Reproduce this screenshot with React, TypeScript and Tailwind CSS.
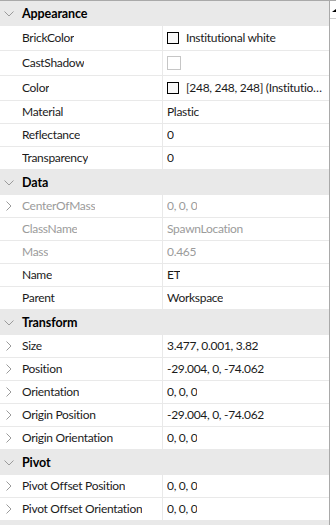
import React from 'react';

type Row = {
  name: string;
  value: string;
  kind?: 'swatch' | 'check';
  disabled?: boolean;
  expand?: boolean;
};

type Section = { title: string; rows: Row[] };

const sections: Section[] = [
  {
    title: 'Appearance',
    rows: [
      { name: 'BrickColor', value: 'Institutional white', kind: 'swatch' },
      { name: 'CastShadow', value: '', kind: 'check' },
      { name: 'Color', value: '[248, 248, 248] (Institutional white)', kind: 'swatch' },
      { name: 'Material', value: 'Plastic' },
      { name: 'Reflectance', value: '0' },
      { name: 'Transparency', value: '0' },
    ],
  },
  {
    title: 'Data',
    rows: [
      { name: 'CenterOfMass', value: '0, 0, 0', disabled: true, expand: true },
      { name: 'ClassName', value: 'SpawnLocation', disabled: true },
      { name: 'Mass', value: '0.465', disabled: true },
      { name: 'Name', value: 'ET' },
      { name: 'Parent', value: 'Workspace' },
    ],
  },
  {
    title: 'Transform',
    rows: [
      { name: 'Size', value: '3.477, 0.001, 3.82', expand: true },
      { name: 'Position', value: '-29.004, 0, -74.062', expand: true },
      { name: 'Orientation', value: '0, 0, 0', expand: true },
      { name: 'Origin Position', value: '-29.004, 0, -74.062', expand: true },
      { name: 'Origin Orientation', value: '0, 0, 0', expand: true },
    ],
  },
  {
    title: 'Pivot',
    rows: [
      { name: 'Pivot Offset Position', value: '0, 0, 0', expand: true },
      { name: 'Pivot Offset Orientation', value: '0, 0, 0', expand: true },
    ],
  },
];

function ChevronDown() {
  return (
    <svg width="10" height="6" viewBox="0 0 10 6" className="text-[#9a9a9a]">
      <path d="M0.5 0.5 L5 5 L9.5 0.5" fill="none" stroke="currentColor" strokeWidth="1" />
    </svg>
  );
}

function ChevronRight() {
  return (
    <svg width="6" height="10" viewBox="0 0 6 10" className="text-[#9a9a9a]">
      <path d="M0.5 0.5 L5 5 L0.5 9.5" fill="none" stroke="currentColor" strokeWidth="1" />
    </svg>
  );
}

function PropRow({ row }: { row: Row }) {
  const tall = row.kind === 'swatch' || row.kind === 'check';
  const text = row.disabled ? 'text-[#9b9b9b]' : 'text-[#1b1b1b]';
  return (
    <div className={`flex border-b border-[#e9e9e9] bg-white ${tall ? 'h-[25px]' : 'h-[23px]'}`}>
      <div className="flex w-[163px] shrink-0 items-center border-r border-[#e9e9e9]">
        <div className="flex w-[22px] shrink-0 items-center pl-[6px]">
          {row.expand && <ChevronRight />}
        </div>
        <span className={`truncate ${text}`}>{row.name}</span>
      </div>
      <div className="flex min-w-0 flex-1 items-center pl-[4px] pr-[6px]">
        {row.kind === 'swatch' && (
          <div className="mr-[7px] h-[12px] w-[12px] shrink-0 border border-black bg-[#f8f8f8]" />
        )}
        {row.kind === 'check' && (
          <div className="h-[14px] w-[14px] shrink-0 border border-[#c6c6c6] bg-white" />
        )}
        <span className={`truncate ${text}`}>{row.value}</span>
      </div>
    </div>
  );
}

export default function App() {
  return (
    <div
      className="flex h-[525px] w-[336px] overflow-hidden border-t border-[#a9a9a9] bg-[#e9e9e9] text-[12px] leading-[16px] tracking-[-0.3px]"
      style={{ fontFamily: 'Lato, "Liberation Sans", sans-serif' }}
    >
      <div className="w-[329px] shrink-0">
        {sections.map((s) => (
          <div key={s.title}>
            <div className="flex h-[25px] items-center bg-[#e9e9e9]">
              <div className="flex w-[22px] shrink-0 items-center pl-[4px]">
                <ChevronDown />
              </div>
              <span className="text-[12.5px] font-bold tracking-[-0.1px] text-black">{s.title}</span>
            </div>
            {s.rows.map((r) => (
              <PropRow key={r.name} row={r} />
            ))}
          </div>
        ))}
      </div>
      <div className="w-[7px] shrink-0 border-l border-[#a9a9a9] bg-white">
        <div className="flex h-[18px] items-start justify-end border-b border-[#d0d0d0] pt-[8px]">
          <svg width="4" height="3" viewBox="0 0 4 3">
            <path d="M4 0 L4 3 L0 3 Z" fill="black" />
          </svg>
        </div>
      </div>
    </div>
  );
}
